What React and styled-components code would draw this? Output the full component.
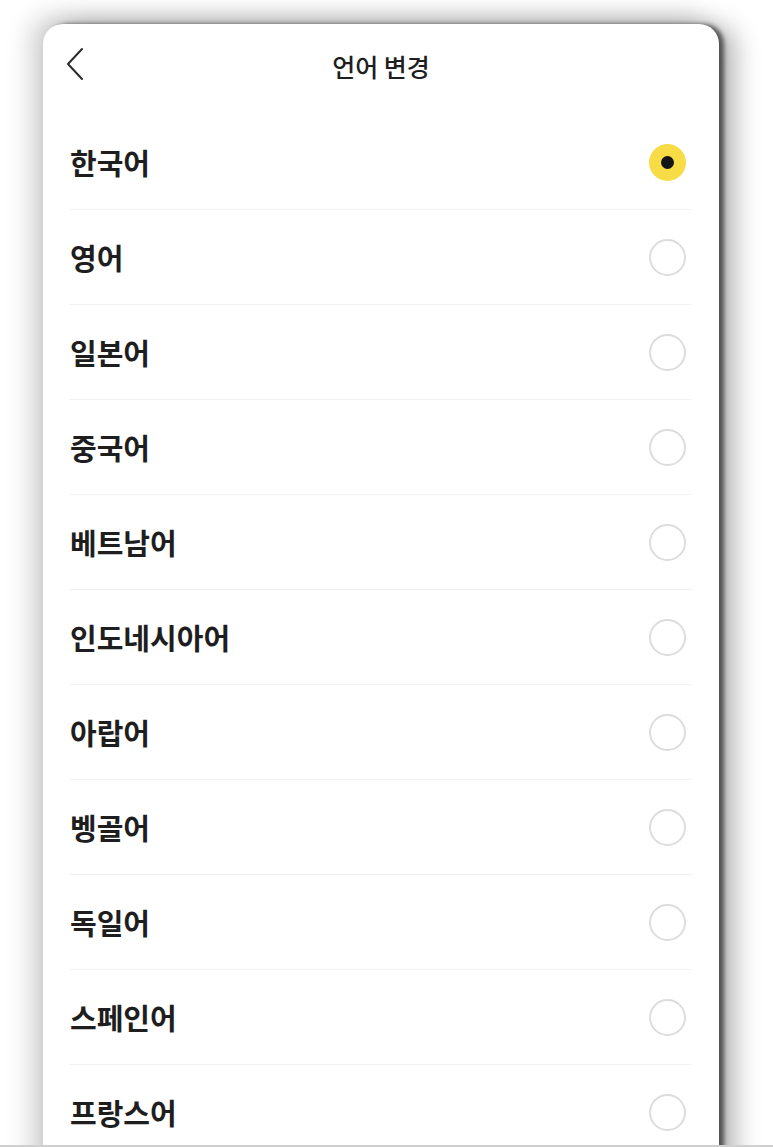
import styled, { createGlobalStyle } from "styled-components"

const GlobalStyle = createGlobalStyle`
  html, body {
    margin: 0;
    padding: 0;
    background: #ffffff;
    overflow: hidden;
  }
  body {
    font-family: "Noto Sans CJK KR", "Noto Sans", sans-serif;
    color: #1e1e1e;
  }
`

const Page = styled.div`
  height: 1147px;
  padding: 24px 54px 0 43px;
  box-sizing: border-box;
  overflow: hidden;
`

const Card = styled.div`
  background: #fff;
  border-radius: 20px 20px 0 0;
  padding: 0 27px;
  height: 1200px;
  box-shadow:
    5px 0 4px rgba(0, 0, 0, 0.55),
    16px 2px 26px rgba(0, 0, 0, 0.3),
    -12px -8px 26px rgba(0, 0, 0, 0.18);
`

const Header = styled.div`
  position: relative;
  height: 91px;
  display: flex;
  justify-content: center;
  padding-top: 23px;
  box-sizing: border-box;
`

const BackButton = styled.button`
  position: absolute;
  left: -8px;
  top: 20px;
  width: 26px;
  height: 40px;
  border: 0;
  padding: 0;
  background: none;
  display: flex;
  align-items: center;
  justify-content: center;
`

const Title = styled.h1`
  margin: 0;
  font-size: 25px;
  line-height: 38px;
  font-weight: 500;
  color: #1e1e1e;
`

const List = styled.ul`
  list-style: none;
  margin: 0;
  padding: 0;
`

const Row = styled.li`
  height: 94px;
  display: flex;
  align-items: center;
  justify-content: space-between;
  border-bottom: 1px solid #f1f1f1;
`

const Label = styled.span`
  font-size: 29px;
  font-weight: 700;
  color: #1e1e1e;
`

const Radio = styled.span`
  width: 37px;
  height: 37px;
  margin-right: 6px;
  border-radius: 50%;
  box-sizing: border-box;
  display: flex;
  align-items: center;
  justify-content: center;
  background: ${(p) => (p.$checked ? "#f8dc45" : "#fff")};
  border: ${(p) => (p.$checked ? "none" : "2px solid #dddddd")};
  &::after {
    content: "";
    display: ${(p) => (p.$checked ? "block" : "none")};
    width: 13px;
    height: 13px;
    border-radius: 50%;
    background: #151515;
  }
`

const BottomEdge = styled.div`
  position: fixed;
  left: 0;
  right: 0;
  bottom: 0;
  height: 2px;
  background: #cfcfcf;
`

const languages = [
  "한국어",
  "영어",
  "일본어",
  "중국어",
  "베트남어",
  "인도네시아어",
  "아랍어",
  "벵골어",
  "독일어",
  "스페인어",
  "프랑스어",
]

export default function App() {
  return (
    <>
      <GlobalStyle />
      <Page>
        <Card>
          <Header>
            <BackButton aria-label="뒤로">
              <svg width="20" height="34" viewBox="0 0 20 34" fill="none">
                <path d="M17 2 L3 17 L17 32" stroke="#2a2a2a" strokeWidth="2" strokeLinecap="round" strokeLinejoin="round" />
              </svg>
            </BackButton>
            <Title>언어 변경</Title>
          </Header>
          <List>
            {languages.map((lang, i) => (
              <Row key={lang}>
                <Label>{lang}</Label>
                <Radio $checked={i === 0} />
              </Row>
            ))}
          </List>
        </Card>
      </Page>
      <BottomEdge />
    </>
  )
}
